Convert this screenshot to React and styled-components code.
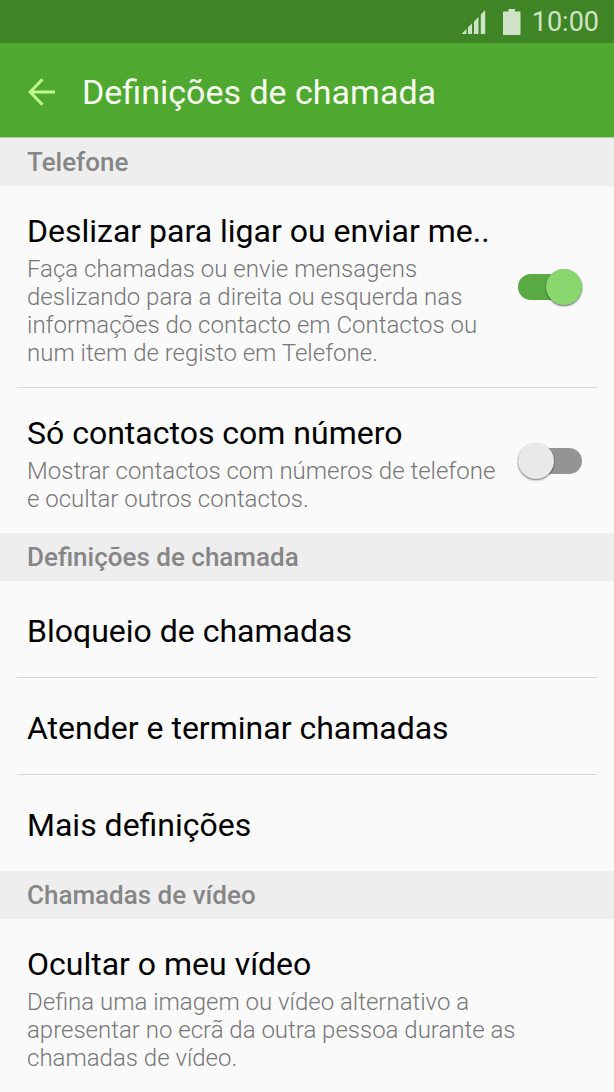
import React, { useState } from 'react';
import styled, { createGlobalStyle } from 'styled-components';

const sections = [
  {
    title: 'Telefone',
    items: [
      {
        id: 'swipe',
        title: 'Deslizar para ligar ou enviar me..',
        text: 'Faça chamadas ou envie mensagens deslizando para a direita ou esquerda nas informações do contacto em Contactos ou num item de registo em Telefone.',
        toggle: true,
      },
      {
        id: 'numbers',
        title: 'Só contactos com número',
        text: 'Mostrar contactos com números de telefone e ocultar outros contactos.',
        toggle: true,
      },
    ],
  },
  {
    title: 'Definições de chamada',
    items: [
      { id: 'block', title: 'Bloqueio de chamadas' },
      { id: 'answer', title: 'Atender e terminar chamadas' },
      { id: 'more', title: 'Mais definições' },
    ],
  },
  {
    title: 'Chamadas de vídeo',
    items: [
      {
        id: 'video',
        title: 'Ocultar o meu vídeo',
        text: 'Defina uma imagem ou vídeo alternativo a apresentar no ecrã da outra pessoa durante as chamadas de vídeo.',
      },
    ],
  },
];

function SignalIcon() {
  return (
    <svg width="24" height="24" viewBox="0 0 24 24" fill="currentColor" aria-hidden="true">
      <path d="M0 24V23.4L4.4 19V24ZM6 24V17.4L10 13.2V24ZM12 24V11.4L16.5 7V24ZM18.8 24V4.6L23.2 0V24Z" />
    </svg>
  );
}

function BatteryIcon() {
  return (
    <svg width="18" height="26" viewBox="0 0 18 26" fill="currentColor" aria-hidden="true">
      <path d="M5.5 0H12V2.5H17.5V26H0V2.5H5.5Z" />
    </svg>
  );
}

function BackIcon() {
  return (
    <svg width="28" height="28" viewBox="0 0 28 28" fill="none" stroke="currentColor" strokeWidth="3" aria-hidden="true">
      <path d="M14.5 1.2L2.2 14L14.5 26.8M2 14H27" />
    </svg>
  );
}

function App() {
  const [enabled, setEnabled] = useState({ swipe: true, numbers: false });

  const toggle = (id) => setEnabled({ ...enabled, [id]: !enabled[id] });

  return (
    <Page>
      <GlobalStyle />
      <StatusBar>
        <SignalIcon />
        <BatteryIcon />
        <time>10:00</time>
      </StatusBar>
      <Header>
        <BackButton type="button" aria-label="Voltar">
          <BackIcon />
        </BackButton>
        <h1>Definições de chamada</h1>
      </Header>
      <main>
        {sections.map((section) => (
          <section key={section.title}>
            <SectionTitle>{section.title}</SectionTitle>
            <List>
              {section.items.map((item) => (
                <Item key={item.id}>
                  {item.toggle ? (
                    <ToggleRow>
                      <ToggleContent>
                        <Title>{item.title}</Title>
                        <Text>{item.text}</Text>
                      </ToggleContent>
                      <Switch
                        type="checkbox"
                        role="switch"
                        checked={enabled[item.id]}
                        onChange={() => toggle(item.id)}
                      />
                    </ToggleRow>
                  ) : (
                    <LinkRow type="button" $simple={!item.text}>
                      <Title>{item.title}</Title>
                      {item.text && <Text>{item.text}</Text>}
                    </LinkRow>
                  )}
                </Item>
              ))}
            </List>
          </section>
        ))}
      </main>
    </Page>
  );
}

export default App;

const GlobalStyle = createGlobalStyle`
  * {
    box-sizing: border-box;
  }

  body {
    margin: 0;
    background-color: #fafafa;
    font-family: Roboto, sans-serif;
  }
`;

const Page = styled.div`
  min-height: 100vh;
  overflow: hidden;
`;

const StatusBar = styled.div`
  height: 43px;
  padding: 0 15px;
  display: flex;
  justify-content: flex-end;
  align-items: center;
  background-color: #3f8525;
  color: #cfe2c8;
  
  svg {
    flex: none;
    margin-right: 17px;
  }
  
  svg + svg {
    margin-right: 11px;
  }
  
  time {
    font-size: 27px;
    line-height: 32px;
  }
`;

const Header = styled.header`
  height: 95px;
  padding: 3px 28px 0;
  display: flex;
  align-items: center;
  gap: 26px;
  border-bottom: 1px solid #b9ceb0;
  background-color: #4fa82f;
  color: #f6fff0;
  
  h1 {
    margin: 0;
    font-size: 34px;
    font-weight: normal;
    line-height: 40px;
  }
`;

const BackButton = styled.button`
  display: flex;
  padding: 0;
  border: none;
  background: none;
  color: #c0fc8e;
  cursor: pointer;
`;

const SectionTitle = styled.h2`
  margin: 0;
  padding: 0 27px;
  background-color: #eee;
  color: #868686;
  font-size: 26px;
  font-weight: 500;
  line-height: 48px;
`;

const List = styled.ul`
  margin: 0;
  padding: 0 17px;
  list-style-type: none;
`;

const Item = styled.li`
  & + & {
    border-top: 1px solid #d6d6d6;
  }
`;

const ToggleRow = styled.label`
  display: flex;
  justify-content: space-between;
  align-items: center;
  gap: 16px;
  padding: 0 15px 0 10px;
  cursor: pointer;
`;

const ToggleContent = styled.span`
  padding: 25px 0 20px;
`;

const LinkRow = styled.button`
  display: block;
  width: 100%;
  padding: ${({ $simple }) => ($simple ? '30px 10px 26px' : '25px 44px 20px 10px')};
  border: none;
  background: none;
  font-family: inherit;
  text-align: start;
  cursor: pointer;
`;

const Title = styled.span`
  display: block;
  color: #000;
  font-size: 32px;
  line-height: 40px;
`;

const Text = styled.span`
  display: block;
  margin-top: 4px;
  color: #777;
  font-size: 24px;
  font-weight: 300;
  line-height: 28px;
`;

const Switch = styled.input`
  appearance: none;
  flex: none;
  display: flex;
  align-items: center;
  justify-content: ${({ checked }) => (checked ? 'flex-end' : 'flex-start')};
  width: 64px;
  height: 26px;
  margin: 0;
  border-radius: 13px;
  background-color: ${({ checked }) => (checked ? '#5aaa43' : '#949494')};
  cursor: pointer;
  
  &::before {
    content: '';
    flex: none;
    width: 36px;
    height: 36px;
    border-radius: 50%;
    background-color: ${({ checked }) => (checked ? '#8bd76f' : '#e9e9e9')};
    box-shadow: 0 1px 2px rgba(0, 0, 0, 0.6);
  }
`;
